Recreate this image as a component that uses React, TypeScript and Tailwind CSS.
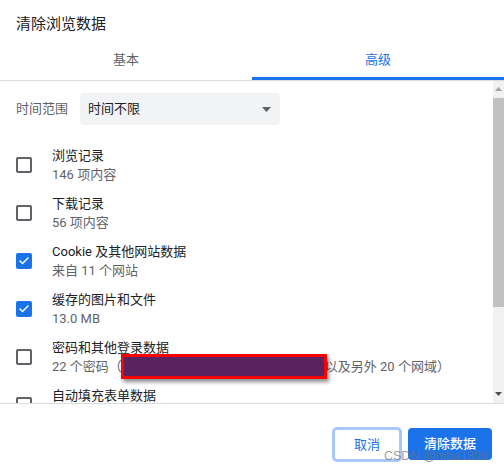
import { Check } from 'lucide-react';

interface Item {
  label: string;
  sub?: string;
  checked: boolean;
  redacted?: boolean;
}

const ITEMS: Item[] = [
  { label: '浏览记录', sub: '146 项内容', checked: false },
  { label: '下载记录', sub: '56 项内容', checked: false },
  { label: 'Cookie 及其他网站数据', sub: '来自 11 个网站', checked: true },
  { label: '缓存的图片和文件', sub: '13.0 MB', checked: true },
  { label: '密码和其他登录数据', checked: false, redacted: true },
  { label: '自动填充表单数据', sub: '\u00a0', checked: false },
];

function Checkbox({ checked }: { checked: boolean }) {
  if (checked) {
    return (
      <div className="w-4 h-4 rounded-[2px] bg-[#1a73e8] flex items-center justify-center shrink-0">
        <Check className="w-[12px] h-[12px] text-white" strokeWidth={3} />
      </div>
    );
  }
  return <div className="w-4 h-4 rounded-[2px] border-2 border-[#5f6368] shrink-0" />;
}

function Row({ item }: { item: Item }) {
  return (
    <div className="h-[48px] flex items-center shrink-0">
      <Checkbox checked={item.checked} />
      <div className="ml-5 flex flex-col">
        <p className="text-[13px] leading-[19px] text-[#202124]">{item.label}</p>
        {item.redacted ? (
          <p className="relative text-[13px] leading-[19px] text-[#5f6368] whitespace-nowrap">
            22 个密码（<span className="inline-block w-[203px]" />以及另外 20 个网域）
            {/* redaction box */}
            <span className="absolute left-[69px] top-[-3px] w-[206px] h-[25px] bg-[#5a2360] border-[3px] border-[#ff0000] shadow-[2px_3px_4px_rgba(0,0,0,0.45)]" />
          </p>
        ) : (
          <p className="text-[13px] leading-[19px] text-[#5f6368]">{item.sub}</p>
        )}
      </div>
    </div>
  );
}

export default function App() {
  return (
    <div className="relative w-[504px] h-[472px] bg-white overflow-hidden flex flex-col font-[Roboto,'Noto_Sans_CJK_SC',sans-serif]">
      {/* Header */}
      <div className="h-[40px] pl-4 pt-[14px] shrink-0">
        <p className="text-[15px] leading-[20px] text-[#202124]">清除浏览数据</p>
      </div>

      {/* Tabs */}
      <div className="flex border-b border-[#dadce0] shrink-0">
        <div className="flex-1 h-[40px] flex items-center justify-center text-[13px] text-[#5f6368]">基本</div>
        <div className="flex-1 h-[40px] flex items-center justify-center text-[13px] text-[#1a73e8] border-b-[3px] border-[#1a73e8] pt-[3px]">
          高级
        </div>
      </div>

      {/* Scroll area */}
      <div className="flex h-[322px] shrink-0 overflow-hidden">
        <div className="flex-1 flex flex-col px-4 pt-3 overflow-hidden">
          <div className="flex items-center shrink-0">
            <span className="text-[13px] text-[#5f6368] w-[64px]">时间范围</span>
            <div className="w-[200px] h-[32px] bg-[#f1f3f4] rounded-[4px] flex items-center justify-between pl-2 pr-[9px]">
              <span className="text-[13px] text-[#202124]">时间不限</span>
              <svg width="9" height="5" viewBox="0 0 9 5">
                <path d="M0 0h9L4.5 5z" fill="#5f6368" />
              </svg>
            </div>
          </div>
          <div className="mt-4 flex flex-col">
            {ITEMS.map((item) => (
              <Row key={item.label} item={item} />
            ))}
          </div>
        </div>

        {/* Scrollbar */}
        <div className="w-[11px] bg-[#f1f1f1] flex flex-col">
          <div className="h-[16px] flex items-center justify-center">
            <svg width="7" height="4" viewBox="0 0 7 4">
              <path d="M0 4h7L3.5 0z" fill="#a3a3a3" />
            </svg>
          </div>
          <div className="mt-px h-[209px] bg-[#c1c1c1]" />
          <div className="flex-1" />
          <div className="h-[18px] flex items-center justify-center">
            <svg width="7" height="4" viewBox="0 0 7 4">
              <path d="M0 0h7L3.5 4z" fill="#505050" />
            </svg>
          </div>
        </div>
      </div>

      {/* Footer */}
      <div className="flex-1 border-t border-[#dadce0] flex justify-end items-start gap-[6px] pr-[12px] pt-[23px]">
        <button className="w-[70px] h-[35px] rounded-[5px] border-[3px] border-[#a8c7fa] bg-white text-[13px] text-[#1a73e8]">
          取消
        </button>
        <button className="mt-px w-[84px] h-[32px] rounded-[4px] bg-[#1a73e8] text-[13px] font-medium text-white">
          清除数据
        </button>
      </div>

      {/* watermark */}
      <span className="absolute left-[384px] top-[448px] text-[12.5px] leading-[16px] text-[#707070]/70 font-['Liberation_Sans',Arial,sans-serif]">
        CSDN @mba1398
      </span>
    </div>
  );
}
